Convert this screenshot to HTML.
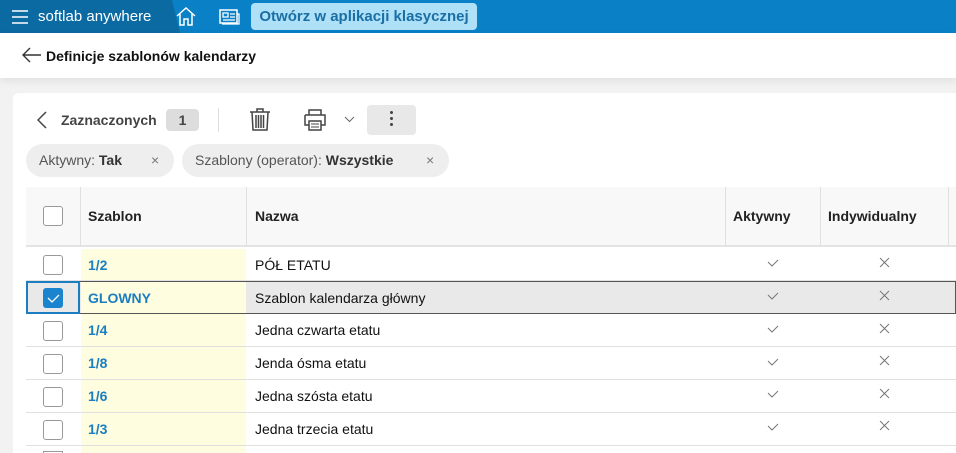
<!DOCTYPE html>
<html><head><meta charset="utf-8"><style>
*{box-sizing:border-box;margin:0;padding:0}
html,body{width:956px;height:453px;overflow:hidden}
body{background:#f2f2f2;font-family:"Liberation Sans",Arial,sans-serif;position:relative}
.top{position:absolute;left:0;top:0;width:956px;height:33px;background:#0a80c6}
.topl{position:absolute;left:0;top:0;width:180px;height:33px;background:#0b6aa1;clip-path:polygon(0 0,172px 0,180px 33px,0 33px)}
.brand{position:absolute;left:38px;top:8px;color:#fff;font-size:15px}
.btn{position:absolute;left:251px;top:3px;width:226px;height:27px;background:#aee0f7;border-radius:4px;color:#1a6fa5;font-size:15px;font-weight:bold;text-align:center;line-height:27px}
.hdr{position:absolute;left:0;top:33px;width:956px;height:45px;background:#fff;box-shadow:0 3px 8px rgba(0,0,0,.08)}
.hdr span{position:absolute;left:46px;top:15px;font-size:14px;font-weight:bold;color:#111}
.card{position:absolute;left:13px;top:93px;width:943px;height:360px;background:#fff;border-radius:6px 0 0 0}
.abs{position:absolute}
.chip{position:absolute;top:144px;height:33px;background:#eeeeee;border-radius:17px;font-size:14px;color:#555;line-height:33px;padding-left:13px}
.chip b{color:#333}
.cb{position:absolute;width:20px;height:20px;border:1px solid #999;border-radius:3px;background:#fff}
.th{position:absolute;top:187px;height:60px;background:#f8f8f8;border-bottom:2px solid #e3e3e3}
.thc{position:absolute;top:208px;font-size:14px;font-weight:bold;color:#222}
.vl{position:absolute;top:187px;height:60px;width:1px;background:#e0e0e0}
.row{position:absolute;left:26px;width:930px;height:33px;border-bottom:1px solid #e0e0e0}
.c1{position:absolute;left:88px;font-size:14px;font-weight:bold;color:#1a7ec0}
.c2{position:absolute;left:255px;font-size:14px;color:#111}
.ck{position:absolute;left:767px}
.x{position:absolute;left:879px}
</style></head><body>
<div class="top"></div><div class="topl"></div>
<svg class="abs" style="left:12px;top:10px" width="16" height="14"><path d="M0 1h16M0 7h16M0 13h16" stroke="#fff" stroke-width="1.6"/></svg>
<div class="brand">softlab anywhere</div>
<svg class="abs" style="left:176px;top:6px" width="20" height="20"><path d="M1 10L10 2l9 8M4 8v11h4v-6h4v6h4V8" fill="none" stroke="#fff" stroke-width="1.5"/></svg>
<svg class="abs" style="left:219px;top:9px" width="21" height="16"><rect x="1" y="1" width="17" height="13" fill="none" stroke="#fff" stroke-width="1.5"/><path d="M4 4h5v4H4zM11 5h5M11 8h5M4 11h12M18 5h2v10H3" fill="none" stroke="#fff" stroke-width="1.3"/></svg>
<div class="btn">Otwórz w aplikacji klasycznej</div>
<div class="hdr"><svg class="abs" style="left:22px;top:14px" width="20" height="16"><path d="M19 8H2M8 1L1 8l7 7" fill="none" stroke="#333" stroke-width="1.4"/></svg><span>Definicje szablonów kalendarzy</span></div>
<div class="card"></div>
<svg class="abs" style="left:37px;top:111px" width="10" height="18"><path d="M9 1L1 9l8 8" fill="none" stroke="#444" stroke-width="1.5"/></svg>
<div class="abs" style="left:61px;top:112px;font-size:14px;font-weight:bold;color:#444">Zaznaczonych</div>
<div class="abs" style="left:166px;top:109px;width:33px;height:22px;background:#ddd;border-radius:4px;text-align:center;line-height:22px;font-size:14px;font-weight:bold;color:#444">1</div>
<div class="abs" style="left:218px;top:108px;width:1px;height:24px;background:#ddd"></div>
<svg class="abs" style="left:249px;top:107px" width="22" height="24"><path d="M1 5h20M8 5V2h6v3M3 5l1 18h14l1-18M7 8v13M9.5 8v13M12 8v13M14.5 8v13" fill="none" stroke="#444" stroke-width="1.5"/></svg>
<svg class="abs" style="left:303px;top:108px" width="24" height="24"><path d="M6 7V2h12v5M2 7h20v10h-4M6 17H2V7M6 13h12v9H6z" fill="none" stroke="#444" stroke-width="1.5"/><path d="M8 16h8M8 19h8" stroke="#444"/></svg>
<svg class="abs" style="left:344px;top:116px" width="11" height="7"><path d="M1 1l4.5 4.5L10 1" fill="none" stroke="#666"/></svg>
<div class="abs" style="left:367px;top:105px;width:49px;height:30px;background:#e8e8e8;border-radius:4px"></div>
<div class="abs" style="left:390px;top:111px;width:3px;height:3px;border-radius:2px;background:#444;box-shadow:0 6px 0 #444,0 12px 0 #444"></div>
<div class="chip" style="left:26px;width:148px">Aktywny: <b>Tak</b><span style="position:absolute;left:125px;color:#777">×</span></div>
<div class="chip" style="left:182px;width:267px">Szablony (operator): <b>Wszystkie</b><span style="position:absolute;left:244px;color:#777">×</span></div>
<div class="th" style="left:26px;width:930px"></div>
<div class="vl" style="left:80px"></div><div class="vl" style="left:246px"></div><div class="vl" style="left:725px"></div><div class="vl" style="left:820px"></div><div class="vl" style="left:948px"></div>
<div class="cb" style="left:43px;top:206px"></div>
<div class="thc" style="left:88px">Szablon</div><div class="thc" style="left:255px">Nazwa</div><div class="thc" style="left:733px">Aktywny</div><div class="thc" style="left:828px">Indywidualny</div>
<div class="abs" style="left:81px;top:249px;width:165px;height:204px;background:#fffde0"></div>
<div class="row" style="top:248px"></div>
<div class="row" style="top:281px;background:#e9e9e9;border:1px solid #555;border-left:none"></div>
<div class="abs" style="left:81px;top:282px;width:165px;height:31px;background:#fffde0"></div>
<div class="abs" style="left:26px;top:281px;width:54px;height:33px;border:2px solid #1a7ec0"></div>
<div class="row" style="top:314px"></div><div class="row" style="top:347px"></div><div class="row" style="top:380px"></div><div class="row" style="top:413px"></div>
<div class="cb" style="left:43px;top:255px"></div>
<div class="abs" style="left:43px;top:288px;width:20px;height:20px;background:#1a84cf;border-radius:3px"><svg width="20" height="20"><path d="M5 10l4 4 7-7" fill="none" stroke="#fff" stroke-width="1.3"/></svg></div>
<div class="cb" style="left:43px;top:321px"></div><div class="cb" style="left:43px;top:354px"></div><div class="cb" style="left:43px;top:387px"></div><div class="cb" style="left:43px;top:420px"></div>
<div class="abs" style="left:43px;top:451px;width:20px;height:2px;border:1px solid #999;border-bottom:none"></div>
<div class="c1" style="top:257px">1/2</div><div class="c2" style="top:257px">PÓŁ ETATU</div>
<div class="c1" style="top:290px">GLOWNY</div><div class="c2" style="top:290px">Szablon kalendarza główny</div>
<div class="c1" style="top:322px">1/4</div><div class="c2" style="top:322px">Jedna czwarta etatu</div>
<div class="c1" style="top:355px">1/8</div><div class="c2" style="top:355px">Jenda ósma etatu</div>
<div class="c1" style="top:388px">1/6</div><div class="c2" style="top:388px">Jedna szósta etatu</div>
<div class="c1" style="top:421px">1/3</div><div class="c2" style="top:421px">Jedna trzecia etatu</div>
<svg class="ck" style="top:259px" width="12" height="8"><path d="M1 3l4 4 6-6" fill="none" stroke="#777"/></svg><svg class="x" style="top:257px" width="11" height="11"><path d="M1 1l9 9M10 1l-9 9" stroke="#777"/></svg>
<svg class="ck" style="top:292px" width="12" height="8"><path d="M1 3l4 4 6-6" fill="none" stroke="#777"/></svg><svg class="x" style="top:290px" width="11" height="11"><path d="M1 1l9 9M10 1l-9 9" stroke="#777"/></svg>
<svg class="ck" style="top:325px" width="12" height="8"><path d="M1 3l4 4 6-6" fill="none" stroke="#777"/></svg><svg class="x" style="top:323px" width="11" height="11"><path d="M1 1l9 9M10 1l-9 9" stroke="#777"/></svg>
<svg class="ck" style="top:358px" width="12" height="8"><path d="M1 3l4 4 6-6" fill="none" stroke="#777"/></svg><svg class="x" style="top:355px" width="11" height="11"><path d="M1 1l9 9M10 1l-9 9" stroke="#777"/></svg>
<svg class="ck" style="top:390px" width="12" height="8"><path d="M1 3l4 4 6-6" fill="none" stroke="#777"/></svg><svg class="x" style="top:388px" width="11" height="11"><path d="M1 1l9 9M10 1l-9 9" stroke="#777"/></svg>
<svg class="ck" style="top:423px" width="12" height="8"><path d="M1 3l4 4 6-6" fill="none" stroke="#777"/></svg><svg class="x" style="top:420px" width="11" height="11"><path d="M1 1l9 9M10 1l-9 9" stroke="#777"/></svg>
</body></html>
